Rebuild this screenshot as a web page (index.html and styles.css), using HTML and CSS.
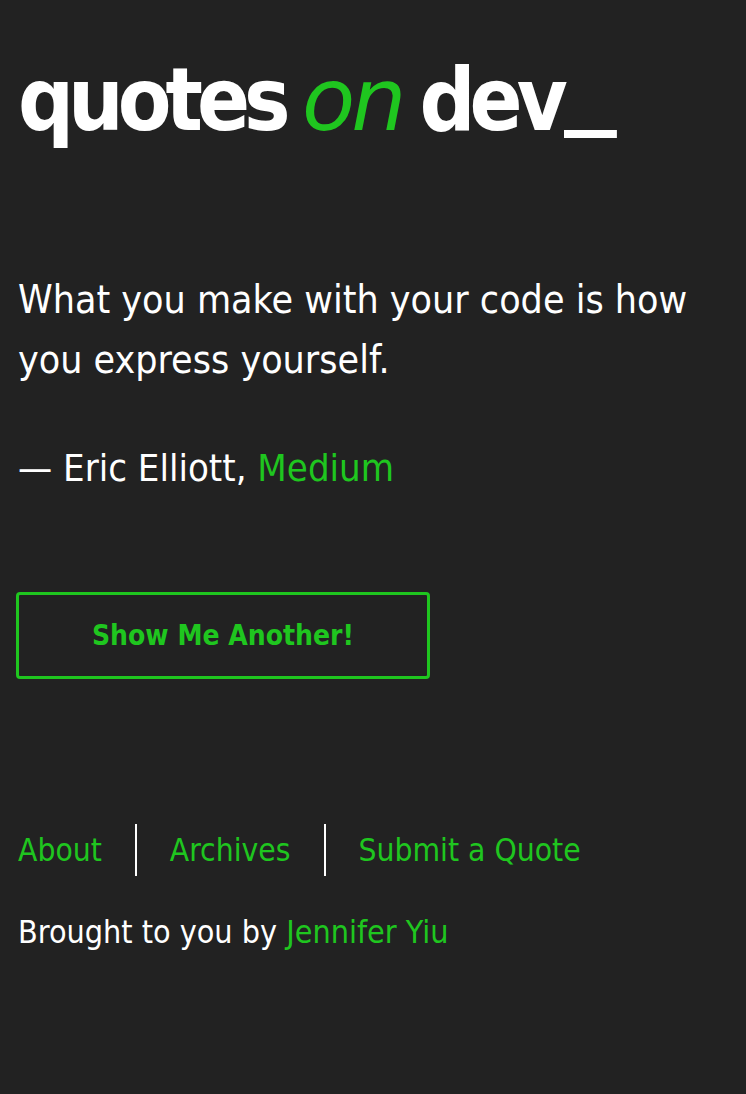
FILE: index.html
```html
<!DOCTYPE html>
<html>
<head>
<meta charset="utf-8">
<link rel="stylesheet" href="styles.css">
</head>
<body>
<div class="page">
  <h1 class="logo">quotes <span class="on">on</span> dev<span class="cursor">_</span></h1>
  <main class="quote">
    <p class="text">What you make with your code is how you express yourself.</p>
    <p class="author">— Eric Elliott, <a class="green" href="#">Medium</a></p>
  </main>
  <button class="btn">Show Me Another!</button>
  <nav class="nav">
    <a class="green nav-item" href="#">About</a>
    <a class="green nav-item" href="#">Archives</a>
    <a class="green nav-item" href="#">Submit a Quote</a>
  </nav>
  <p class="credit">Brought to you by <a class="green" href="#">Jennifer Yiu</a></p>
</div>
</body>
</html>
```
FILE: styles.css
```css
html, body {
  margin: 0;
  padding: 0;
  background: #222222;
  color: #ffffff;
  font-family: "DejaVu Sans Condensed", "DejaVu Sans", sans-serif;
}
.page {
  padding: 40px 18px 0 18px;
}
.logo {
  margin: 0;
  font-size: 87px;
  line-height: 120px;
  font-weight: bold;
  letter-spacing: -6px;
  word-spacing: -4px;
  color: #fff;
  white-space: nowrap;
}
.on {
  font-style: italic;
  color: #1fc61f;
  font-family: "DejaVu Sans", sans-serif;
  font-weight: 200;
  letter-spacing: -4px;
}
.cursor {
  display: inline-block;
  margin-left: 2px;
  transform: translateY(-13px) scaleX(1.35);
  transform-origin: left center;
  letter-spacing: 0;
}
.green {
  color: #1fc61f;
  text-decoration: none;
}
.quote {
  margin-top: 110px;
}
.text {
  margin: 0;
  font-size: 39px;
  line-height: 60px;
  font-weight: 300;
  max-width: 700px;
}
.author {
  margin: 48px 0 0 0;
  font-size: 38px;
  line-height: 60px;
}
.btn {
  margin-top: 94px;
  margin-left: -2px;
  width: 414px;
  height: 87px;
  background: transparent;
  border: 3px solid #1fc61f;
  border-radius: 4px;
  color: #1fc61f;
  font-family: "DejaVu Sans Condensed", "DejaVu Sans", sans-serif;
  font-size: 28px;
  font-weight: 600;
  padding: 0;
}
.nav {
  display: flex;
  margin-top: 145px;
}
.nav-item {
  font-size: 31.5px;
  line-height: 52px;
  padding: 0 33px;
  border-left: 2px solid #fff;
}
.nav-item:first-child {
  padding-left: 0;
  border-left: none;
}
.credit {
  margin: 36px 0 0 0;
  font-size: 32px;
  line-height: 40px;
}
```
